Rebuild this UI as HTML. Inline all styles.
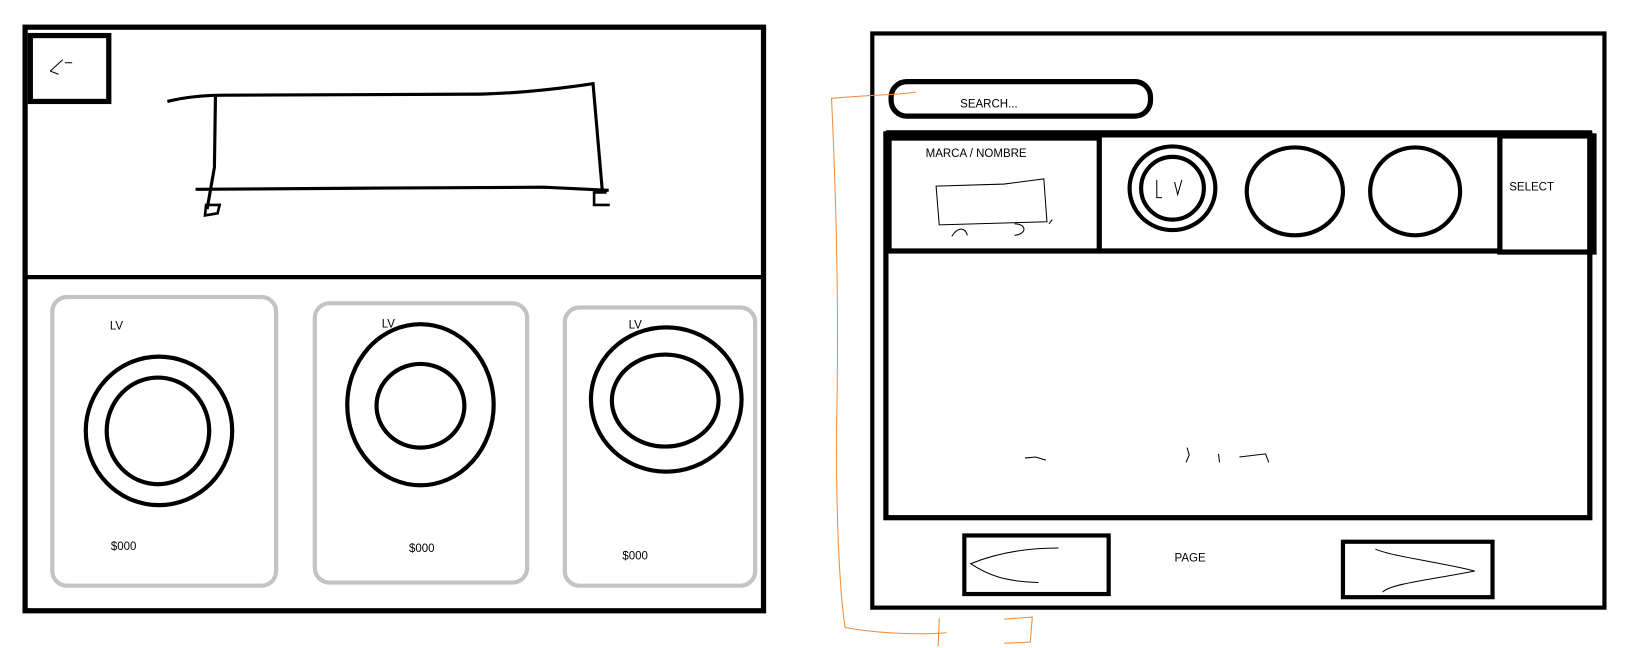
<!DOCTYPE html>
<html><head><meta charset="utf-8"><style>
html,body{margin:0;padding:0;background:#fff;}
svg{display:block;}
text{font-family:"Liberation Sans",sans-serif;font-size:11px;fill:#000;}
</style></head><body>
<svg width="1640" height="648" viewBox="0 0 1568 619.6" preserveAspectRatio="none" xmlns="http://www.w3.org/2000/svg">
<rect width="1568" height="620" fill="#fff"/>
<!-- LEFT FRAME -->
<g fill="none" stroke="#000">
<rect x="24" y="26" width="706" height="558" stroke-width="5"/>
<line x1="24" y1="265" x2="730" y2="265" stroke-width="4"/>
<rect x="29" y="34" width="75" height="63" stroke-width="5"/>
<path d="M48 68 L60 57 M48 68 L56 71 M62 60 L69 60" stroke-width="1"/>
<path d="M160 97 C180 92 200 91 215 91 L460 90 C500 89 540 84 567 80 L576 184" stroke-width="3"/>
<path d="M206 92 L205 160 L198 200" stroke-width="3"/>
<path d="M187 181 L340 180 L520 179 L582 182" stroke-width="3"/>
<path d="M197 196 L210 196 L208 204 L196 206 Z" stroke-width="2.5"/>
<path d="M580 184 L568 184 L568 196 L583 196" stroke-width="2.5"/>
</g>
<g fill="none" stroke="#c3c3c3" stroke-width="4">
<rect x="50" y="284" width="214" height="276" rx="14"/>
<rect x="301" y="290" width="203" height="267" rx="14"/>
<rect x="540" y="294" width="182" height="266" rx="14"/>
</g>
<g fill="none" stroke="#000" stroke-width="4">
<ellipse cx="152" cy="412" rx="70" ry="71"/>
<ellipse cx="151" cy="412" rx="49" ry="51"/>
<ellipse cx="402" cy="387" rx="70" ry="77"/>
<ellipse cx="402" cy="388" rx="42" ry="40"/>
<ellipse cx="637" cy="382" rx="72" ry="69"/>
<ellipse cx="636" cy="383" rx="51" ry="44"/>
</g>
<text x="105" y="315">LV</text>
<text x="365" y="313">LV</text>
<text x="601" y="314">LV</text>
<text x="106" y="526">$000</text>
<text x="391" y="528">$000</text>
<text x="595" y="535">$000</text>
<!-- RIGHT FRAME -->
<g fill="none" stroke="#000">
<rect x="834" y="32" width="700" height="549" stroke-width="4"/>
<rect x="852" y="78" width="248" height="33" rx="15" stroke-width="5"/>
<rect x="847" y="128" width="673" height="367" stroke-width="5"/>
<line x1="847" y1="128" x2="1522" y2="128" stroke-width="7"/>
<rect x="850" y="132" width="201" height="108" stroke-width="5"/>
<line x1="1053" y1="240" x2="1434" y2="240" stroke-width="5"/>
<rect x="1434" y="130" width="90" height="111" stroke-width="5"/>
<path d="M895 178 L960 176 L998 171 L1001 212 L898 215 Z" stroke-width="1"/>
<path d="M910 226 C915 218 922 216 925 225 M970 214 C982 214 982 224 970 225 M1006 210 L1003 214" stroke-width="1"/>
<ellipse cx="1121" cy="180" rx="41" ry="40" stroke-width="4"/>
<ellipse cx="1121" cy="180" rx="30" ry="30" stroke-width="4"/>
<path d="M1106 172 L1106 189 L1111 189 M1123 174 L1126 186 L1130 172" stroke-width="1"/>
<ellipse cx="1238" cy="183" rx="46" ry="42" stroke-width="4"/>
<ellipse cx="1353" cy="183" rx="43" ry="42" stroke-width="4"/>
<rect x="922" y="512" width="138" height="56" stroke-width="4"/>
<path d="M1012 524 C990 524 960 526 928 539 C945 550 960 556 993 557" stroke-width="1"/>
<rect x="1284" y="518" width="143" height="53" stroke-width="4"/>
<path d="M1315 525 C1330 532 1380 538 1410 546 C1370 554 1330 558 1322 566" stroke-width="1"/>
<path d="M980 438 L990 437 L1000 440 M1135 428 L1137 435 L1134 442 M1165 434 L1166 442 M1185 437 L1210 434 L1213 442" stroke-width="1"/>
</g>
<text x="918" y="103">SEARCH...</text>
<text x="885" y="150">MARCA / NOMBRE</text>
<text x="1443" y="182">SELECT</text>
<text x="1123" y="537">PAGE</text>
<!-- orange annotation -->
<path d="M876 88 C860 91 840 90 795 94 C800 200 802 300 800 400 C799 480 802 560 808 600 C840 606 880 607 905 605 M898 591 L897 618 M960 615 L985 614 L987 590 L960 592" fill="none" stroke="#f28c3a" stroke-width="1"/>
</svg>
</body></html>
